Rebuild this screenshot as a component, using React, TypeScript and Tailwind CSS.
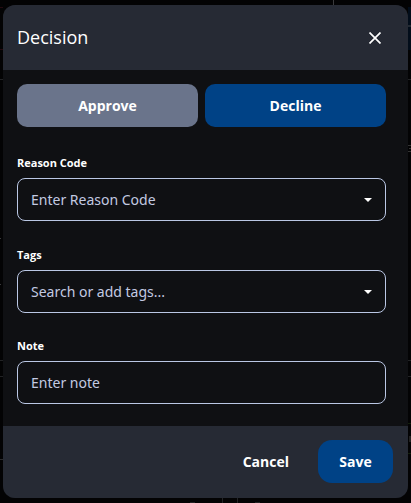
import { useState } from "react"

interface Shape {
  className: string
}

// Dimmed page visible around the dialog
const backdrop: Shape[] = [
  { className: "left-[333px] top-0 w-px h-[5px] bg-[#3a3a3c]" },
  { className: "left-0 top-[7px] w-[3px] h-px bg-[#240a10]" },
  { className: "left-0 top-[49px] w-[3px] h-px bg-[#240a10]" },
  { className: "left-0 top-[79px] w-[3px] h-px bg-[#222325]" },
  { className: "left-0 top-[238px] w-px h-px bg-[#3a3a3c]" },
  { className: "left-0 top-[284px] w-px h-px bg-[#3a3a3c]" },
  { className: "left-0 top-[360px] w-[3px] h-px bg-[#222325]" },
  { className: "left-0 top-[376px] w-[3px] h-px bg-[#222325]" },
  { className: "left-0 top-[459px] w-[3px] h-px bg-[#2c2c2e]" },
  { className: "right-0 top-[7px] w-[3px] h-[43px] bg-[#020d1a]" },
  { className: "right-0 top-[25px] w-[3px] h-[2px] bg-[#222a33]" },
  { className: "right-0 top-[79px] w-[3px] h-px bg-[#222325]" },
  { className: "right-0 top-[145px] w-[3px] h-px bg-[#333333]" },
  { className: "right-0 top-[148px] w-[2px] h-px bg-[#333333]" },
  { className: "right-0 top-[151px] w-[3px] h-px bg-[#333333]" },
  { className: "right-0 top-[360px] w-[3px] h-px bg-[#222325]" },
  { className: "right-0 top-[376px] w-[3px] h-px bg-[#222325]" },
  { className: "right-0 top-[423px] w-[3px] h-px bg-[#14200c]" },
  { className: "right-0 top-[436px] w-[2px] h-[6px] bg-[#222222]" },
  { className: "right-0 top-[453px] w-[3px] h-px bg-[#14200c]" },
  { className: "left-[222px] top-[498px] w-px h-[5px] bg-[#222325]" },
  { className: "left-[237px] top-[498px] w-px h-[5px] bg-[#222325]" },
  { className: "left-[190px] top-[502px] w-[5px] h-px bg-[#222325]" },
  { className: "left-[255px] top-[502px] w-[5px] h-px bg-[#222325]" },
]

const fieldClass =
  "block w-full h-[43px] appearance-none rounded-lg border border-[#bac7e4] bg-transparent px-[13px] font-['Noto_Sans','Open_Sans',sans-serif] text-sm text-[#c3cae2] placeholder:text-[#c3cae2] placeholder:opacity-100 focus:outline-none"
const labelClass = "mb-[7px] block text-[11px] leading-4 font-bold text-white"

function Caret() {
  return (
    <svg
      viewBox="0 0 8 4"
      aria-hidden="true"
      className="pointer-events-none absolute right-3.5 top-5 h-1 w-2 text-white"
    >
      <path d="M0 0h8L4 4z" fill="currentColor" />
    </svg>
  )
}

export default function App() {
  const [decision, setDecision] = useState<"approve" | "decline">("decline")
  const [reason, setReason] = useState("")
  const [tags, setTags] = useState("")
  const [note, setNote] = useState("")

  return (
    <div className="relative min-h-screen overflow-hidden bg-[#030304] px-[3px] py-[5px] font-['Open_Sans','Noto_Sans',sans-serif]">
      {backdrop.map((s, i) => (
        <span key={i} aria-hidden="true" className={`absolute ${s.className}`} />
      ))}

      <form
        role="dialog"
        aria-labelledby="decision-title"
        onSubmit={(e) => e.preventDefault()}
        className="relative overflow-hidden rounded-xl bg-[#0f1013]"
      >
        <header className="flex items-center justify-between bg-[#262a34] py-[18px] pl-3.5 pr-[22px]">
          <h2 id="decision-title" className="text-lg leading-[29px] text-white">Decision</h2>
          <button type="button" aria-label="Close" className="flex size-[22px] items-center justify-center text-white">
            <svg viewBox="0 0 12 12" className="size-3" fill="none" stroke="currentColor" strokeWidth="1.7">
              <path d="M.5.5l11 11M11.5.5l-11 11" />
            </svg>
          </button>
        </header>

        <div className="pb-[22px] pl-3.5 pr-[22px] pt-3.5">
          <div className="mb-7 grid grid-cols-2 gap-[7px]">
            <button
              type="button"
              aria-pressed={decision === "approve"}
              onClick={() => setDecision("approve")}
              className={`h-[43px] rounded-[10px] text-sm font-bold text-white ${decision === "approve" ? "bg-[#004286]" : "bg-[#6a748b]"}`}
            >
              Approve
            </button>
            <button
              type="button"
              aria-pressed={decision === "decline"}
              onClick={() => setDecision("decline")}
              className={`h-[43px] rounded-[10px] text-sm font-bold text-white ${decision === "decline" ? "bg-[#004286]" : "bg-[#6a748b]"}`}
            >
              Decline
            </button>
          </div>

          <div>
            <div className="mb-[26px]">
              <label htmlFor="reason" className={labelClass}>Reason Code</label>
              <div className="relative">
                <select id="reason" value={reason} onChange={(e) => setReason(e.target.value)} className={fieldClass}>
                  <option value="">Enter Reason Code</option>
                </select>
                <Caret />
              </div>
            </div>

            <div className="mb-[25px]">
              <label htmlFor="tags" className={labelClass}>Tags</label>
              <div className="relative">
                <input
                  id="tags"
                  type="text"
                  role="combobox"
                  aria-expanded={false}
                  value={tags}
                  onChange={(e) => setTags(e.target.value)}
                  placeholder="Search or add tags..."
                  className={fieldClass}
                />
                <Caret />
              </div>
            </div>

            <div>
              <label htmlFor="note" className={labelClass}>Note</label>
              <input
                id="note"
                type="text"
                value={note}
                onChange={(e) => setNote(e.target.value)}
                placeholder="Enter note"
                className={fieldClass}
              />
            </div>
          </div>
        </div>

        <footer className="flex justify-end gap-2 bg-[#262a34] pb-[15px] pl-3.5 pr-[15px] pt-3.5">
          <button type="button" className="h-[43px] rounded-[14px] px-[21px] text-sm font-bold text-white">
            Cancel
          </button>
          <button type="submit" className="h-[43px] min-w-[75px] rounded-[14px] bg-[#004286] px-[21px] text-sm font-bold text-white">
            Save
          </button>
        </footer>
      </form>
    </div>
  )
}
